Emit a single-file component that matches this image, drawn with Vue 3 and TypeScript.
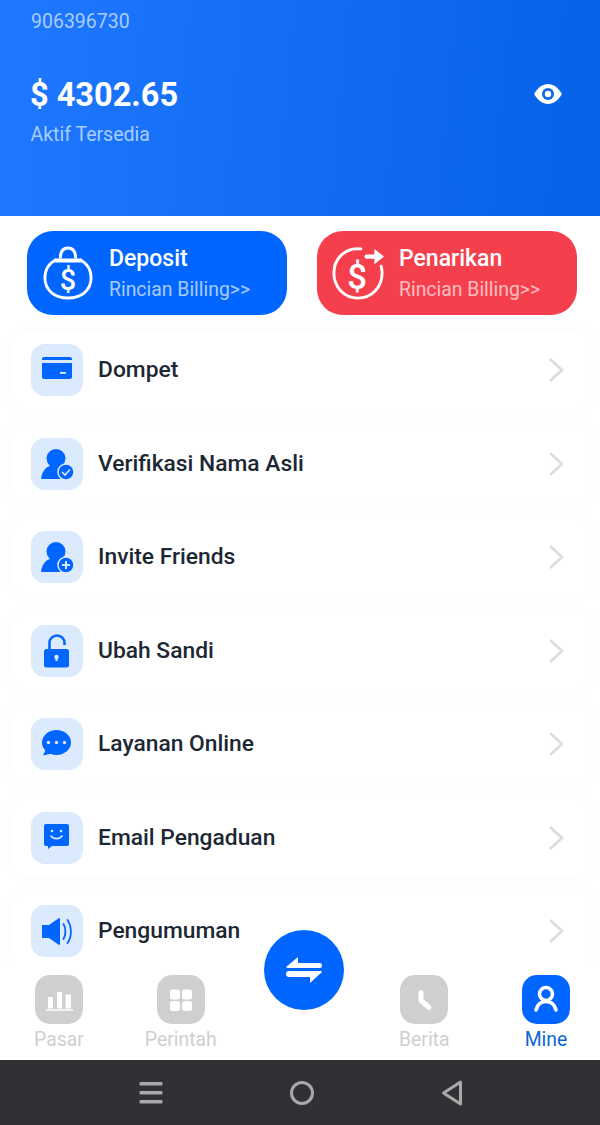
<template>
  <div class="page">
    <header class="hero">
      <div class="account">906396730</div>
      <div class="balance-row">
        <div class="balance">$ 4302.65</div>
        <svg class="eye" viewBox="0 0 30 24">
          <path d="M1 12C5 5.500 9.500 2 15 2s10 3.500 14 10c-4 6.500-8.500 10-14 10S5 18.500 1 12z" fill="#fff" />
          <circle cx="15" cy="12" r="6" fill="#1266f0" />
          <circle cx="15" cy="12" r="3.200" fill="#fff" />
        </svg>
      </div>
      <div class="hint">Aktif Tersedia</div>
    </header>

    <section class="actions">
      <div class="action deposit">
        <svg class="action-icon" viewBox="0 0 52 56" fill="none" stroke="#fff" stroke-width="3">
          <path d="M14 14C6 18 2 25 2 33c0 13 10 21 24 21s24-8 24-21c0-8-4-15-12-19" />
          <path d="M18 13c0-7 3-11 8-11s8 4 8 11" />
          <path d="M13 15h26" stroke-width="4" stroke-linecap="round" />
          <text x="26" y="46" text-anchor="middle" class="dollar" stroke="none" fill="#fff">$</text>
        </svg>
        <div>
          <div class="action-title">Deposit</div>
          <div class="action-sub">Rincian Billing&gt;&gt;</div>
        </div>
      </div>
      <div class="action withdraw">
        <svg class="action-icon" viewBox="0 0 56 56" fill="none" stroke="#fff" stroke-width="3">
          <path d="M31 3C14 1 3 14 3 28c0 15 11 26 25 26s25-11 25-26c0-3-.5-5-1-7" stroke-linecap="round" />
          <path d="M37 11h10" stroke-width="4.500" stroke-linecap="round" />
          <path d="M45 3l10 8-10 8z" fill="#fff" stroke="none" />
          <text x="27" y="45" text-anchor="middle" class="dollar big" stroke="none" fill="#fff">$</text>
        </svg>
        <div>
          <div class="action-title">Penarikan</div>
          <div class="action-sub">Rincian Billing&gt;&gt;</div>
        </div>
      </div>
    </section>

    <main class="list">
      <div v-for="item in menu" :key="item.key" class="row">
        <div class="tile">
          <svg viewBox="0 0 52 52" fill="#0066ff">
            <template v-if="item.key === 'wallet'">
              <path d="M13 13h26a2 2 0 0 1 2 2v1H11v-1a2 2 0 0 1 2-2z" />
              <path d="M11 19h30v14a2 2 0 0 1-2 2H13a2 2 0 0 1-2-2z" />
              <path d="M29 28h6v1.800h-6z" fill="#dceafe" />
            </template>
            <template v-else-if="item.key === 'verify' || item.key === 'invite'">
              <circle cx="25" cy="20.500" r="9.500" />
              <path d="M10 41c1-8 5-12 9-13h12c3 1 5 2.500 6 5-5 0-8 4-7 8z" />
              <circle cx="35" cy="34" r="8" stroke="#dceafe" stroke-width="1.500" />
              <path v-if="item.key === 'verify'" d="M31 34l3 3 5-5.500" fill="none" stroke="#dceafe" stroke-width="1.600" />
              <path v-else d="M31 34h8M35 30v8" fill="none" stroke="#dceafe" stroke-width="2" />
            </template>
            <template v-else-if="item.key === 'lock'">
              <path d="M18.500 25v-7a7.500 7.500 0 0 1 15 0v2" fill="none" stroke="#0066ff" stroke-width="2.600" />
              <rect x="13" y="24" width="25" height="18.500" rx="2.500" />
              <circle cx="25.500" cy="32" r="2.200" fill="#dceafe" />
              <path d="M24.500 32h2v4h-2z" fill="#dceafe" />
            </template>
            <template v-else-if="item.key === 'chat'">
              <ellipse cx="25.500" cy="24.500" rx="14.500" ry="12.500" />
              <path d="M15 31l-3 6.500 9-2z" />
              <circle cx="17.500" cy="24.500" r="1.700" fill="#dceafe" />
              <circle cx="25.500" cy="24.500" r="1.700" fill="#dceafe" />
              <circle cx="33.500" cy="24.500" r="1.700" fill="#dceafe" />
            </template>
            <template v-else-if="item.key === 'mail'">
              <path d="M15 12h21a2 2 0 0 1 2 2v18a2 2 0 0 1-2 2H21l-4 3v-3h-2a2 2 0 0 1-2-2V14a2 2 0 0 1 2-2z" />
              <circle cx="21" cy="19" r="1.300" fill="#dceafe" />
              <circle cx="30" cy="19" r="1.300" fill="#dceafe" />
              <path d="M20 24c2.500 3.500 8.500 3.500 11 0" fill="none" stroke="#dceafe" stroke-width="1.600" stroke-linecap="round" />
            </template>
            <template v-else>
              <path d="M11 20h7l10-7a1 1 0 0 1 1 1v25a1 1 0 0 1-1 1l-10-7h-7z" />
              <path d="M32.500 19c2.500 4 2.500 11 0 15M36.500 15c4.500 6.500 4.500 17 0 23" fill="none" stroke="#0066ff" stroke-width="1.800" stroke-linecap="round" />
            </template>
          </svg>
        </div>
        <div class="row-label">{{ item.label }}</div>
        <svg class="chevron" viewBox="0 0 16 26" fill="none">
          <path d="M2 2l12 11L2 24" stroke="#dcdcdc" stroke-width="2.600" />
        </svg>
      </div>
    </main>

    <nav class="tabs">
      <div v-for="tab in tabs" :key="tab.key" class="tab" :class="{ active: tab.key === 'mine', spacer: tab.key === 'swap' }">
        <template v-if="tab.key !== 'swap'">
          <div class="tab-icon">
            <svg viewBox="0 0 48 48" fill="#fff">
              <template v-if="tab.key === 'market'">
                <path d="M13 21.500h5V33h-5zM22 16.500h5V33h-5zM30.500 19h5.500v14h-5.500z" />
                <path d="M11 33.800h27v1.400H11z" />
              </template>
              <template v-else-if="tab.key === 'orders'">
                <rect x="13" y="14" width="10" height="10" rx="2.500" />
                <rect x="25" y="14" width="10" height="10" rx="2.500" />
                <rect x="13" y="25.500" width="10" height="10" rx="2.500" />
                <rect x="25" y="25.500" width="10" height="10" rx="2.500" />
              </template>
              <template v-else-if="tab.key === 'news'">
                <path d="M21 17v8l8 7" fill="none" stroke="#fff" stroke-width="5" stroke-linecap="round" stroke-linejoin="round" />
              </template>
              <template v-else>
                <circle cx="24" cy="18.500" r="6.500" fill="none" stroke="#fff" stroke-width="3.600" />
                <path d="M14 34.500c1.500-6 5-8.500 10-8.500s8.500 2.500 10 8.500" fill="none" stroke="#fff" stroke-width="3.600" stroke-linecap="round" />
              </template>
            </svg>
          </div>
          <div class="tab-label">{{ tab.label }}</div>
        </template>
      </div>
    </nav>

    <div class="fab">
      <svg viewBox="0 0 36 26" fill="#fff">
        <path d="M0 10L12 0v6h21.500a2.500 2.500 0 0 1 0 5H1.500z" />
        <path d="M36 15L24 26v-6H3a3 3 0 0 1 0-6h32z" />
      </svg>
    </div>

    <footer class="sysbar">
      <svg class="sys-menu" viewBox="0 0 24 22" fill="#a9a9a9">
        <rect x="0.500" y="0" width="23" height="3.500" rx="1" />
        <rect x="0.500" y="9" width="23" height="3.500" rx="1" />
        <rect x="0.500" y="18" width="23" height="3.500" rx="1" />
      </svg>
      <svg class="sys-home" viewBox="0 0 26 26" fill="none">
        <circle cx="13" cy="13" r="10.500" stroke="#a9a9a9" stroke-width="3" />
      </svg>
      <svg class="sys-back" viewBox="0 0 22 26" fill="none">
        <path d="M19.500 2v22L2.500 13z" stroke="#a9a9a9" stroke-width="3" stroke-linejoin="round" />
      </svg>
    </footer>
  </div>
</template>

<script setup lang="ts">
interface MenuItem {
  key: string
  label: string
}

const menu: MenuItem[] = [
  { key: 'wallet', label: 'Dompet' },
  { key: 'verify', label: 'Verifikasi Nama Asli' },
  { key: 'invite', label: 'Invite Friends' },
  { key: 'lock', label: 'Ubah Sandi' },
  { key: 'chat', label: 'Layanan Online' },
  { key: 'mail', label: 'Email Pengaduan' },
  { key: 'speaker', label: 'Pengumuman' },
]

const tabs: MenuItem[] = [
  { key: 'market', label: 'Pasar' },
  { key: 'orders', label: 'Perintah' },
  { key: 'swap', label: '' },
  { key: 'news', label: 'Berita' },
  { key: 'mine', label: 'Mine' },
]
</script>

<style>
html,
body {
  margin: 0;
  background: #fff;
}
</style>

<style scoped>
.page {
  position: relative;
  display: flex;
  flex-direction: column;
  width: 600px;
  height: 1125px;
  overflow: hidden;
  background: #fff;
  font-family: Roboto, "Noto Sans", sans-serif;
}

.hero {
  flex: none;
  box-sizing: border-box;
  height: 216px;
  padding: 10px 37px 0 31px;
  background: linear-gradient(95deg, #1f78ff 0%, #0561e8 100%);
  color: #fff;
}

.account {
  font-size: 19.500px;
  line-height: 24px;
  color: #a9cdff;
}

.balance-row {
  display: flex;
  align-items: center;
  justify-content: space-between;
  margin-top: 37px;
}

.balance {
  margin-left: -1px;
  font-size: 32.500px;
  font-weight: 700;
  line-height: 48px;
}

.eye {
  width: 30px;
  height: 24px;
  margin-bottom: 2px;
}

.hint {
  margin-top: 3px;
  margin-left: -0.500px;
  font-size: 19.500px;
  line-height: 26px;
  color: #a9cdff;
}

.actions {
  flex: none;
  display: flex;
  justify-content: space-between;
  padding: 15px 23px 0 27px;
}

.action {
  display: flex;
  align-items: center;
  box-sizing: border-box;
  width: 260px;
  height: 84px;
  padding-left: 16px;
  border-radius: 26px;
  color: #fff;
}

.action > div {
  padding-top: 2px;
}

.deposit {
  background: #0066ff;
}

.withdraw {
  padding-left: 13px;
  background: #f63f4d;
}

.action-icon {
  flex: none;
  width: 50px;
  height: 54px;
  margin-right: 16px;
}

.withdraw .action-icon {
  width: 56px;
  margin-right: 13px;
}

.dollar {
  font-family: Roboto, sans-serif;
  font-size: 30px;
  font-weight: 500;
}

.dollar.big {
  font-size: 36px;
}

.action-title {
  font-size: 23px;
  font-weight: 500;
  line-height: 30px;
}

.action-sub {
  margin-top: 1px;
  font-size: 19.400px;
  line-height: 30px;
  opacity: 0.65;
}

.list {
  flex: 1;
  min-height: 0;
  overflow: hidden;
  padding: 17px 10px 0 12px;
}

.row {
  display: flex;
  align-items: center;
  box-sizing: border-box;
  height: 76px;
  margin-bottom: 17.500px;
  padding: 0 26px 0 19px;
  border-radius: 14px;
  background: #fff;
  box-shadow: 0 0 20px rgba(0, 0, 0, 0.024);
}

.tile {
  flex: none;
  width: 52px;
  height: 52px;
  margin-right: 15px;
  border-radius: 14px;
  background: #dceafe;
}

.tile svg {
  display: block;
  width: 52px;
  height: 52px;
}

.row-label {
  flex: 1;
  padding-bottom: 1px;
  font-size: 22.800px;
  font-weight: 500;
  color: #1d2733;
}

.chevron {
  flex: none;
  width: 16px;
  height: 26px;
}

.tabs {
  flex: none;
  display: flex;
  justify-content: space-between;
  box-sizing: border-box;
  height: 95px;
  padding: 10px 14px 0 19px;
  background: #fff;
}

.tab {
  display: flex;
  flex-direction: column;
  align-items: center;
  width: 80px;
}

.tab-icon {
  width: 48px;
  height: 49px;
  border-radius: 15px;
  background: #cfcfcf;
}

.tab-icon svg {
  display: block;
  width: 48px;
  height: 49px;
}

.tab-label {
  margin-top: 3px;
  font-size: 19.400px;
  line-height: 26px;
  color: #cfcfcf;
}

.tab.active .tab-icon {
  background: #0066ff;
}

.tab.active .tab-label {
  color: #0a66d0;
}

.fab {
  position: absolute;
  left: 264px;
  top: 930px;
  display: flex;
  align-items: center;
  justify-content: center;
  width: 80px;
  height: 80px;
  border-radius: 50%;
  background: #0066ff;
}

.fab svg {
  width: 36px;
  height: 26px;
}

.sysbar {
  flex: none;
  position: relative;
  display: flex;
  align-items: center;
  box-sizing: border-box;
  height: 65px;
  padding-left: 139px;
  background: #303134;
}

.sys-menu {
  width: 24px;
  height: 22px;
}

.sys-home {
  width: 26px;
  height: 26px;
  margin-left: 126px;
}

.sys-back {
  width: 22px;
  height: 26px;
  margin-left: 126px;
}
</style>
